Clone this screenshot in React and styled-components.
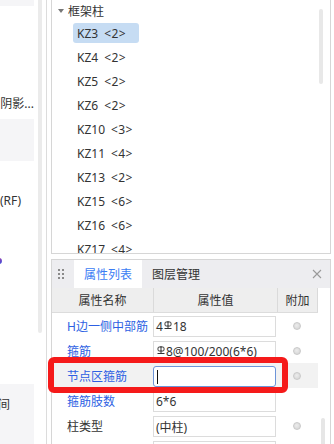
import React from "react";
import styled, { createGlobalStyle } from "styled-components";

const Global = createGlobalStyle`
  html, body { margin: 0; padding: 0; background: #fff; }
  body { font-family: "Noto Sans", "Noto Sans CJK SC", sans-serif; font-size: 12px; color: #333; }
  * { box-sizing: border-box; }
`;

const Page = styled.div`
  position: relative;
  display: flex;
  width: 334px;
  height: 444px;
  overflow: hidden;
  background: #fff;
`;

const Sidebar = styled.div`
  display: flex;
  width: 47px;
  height: 100%;
  border-right: 1px solid #dcdcdc;
  flex-shrink: 0;
`;

const SideContent = styled.div`
  width: 38px;
  display: flex;
  flex-direction: column;
  overflow: hidden;
`;

const SideBlock = styled.div`
  width: 34px;
  height: ${(p) => p.$h}px;
  margin-top: ${(p) => p.$mt || 0}px;
  background: #f5f5f7;
  flex-shrink: 0;
  display: flex;
  flex-direction: column;
`;

const SideText = styled.div`
  width: 34px;
  height: 16px;
  margin-top: ${(p) => p.$mt || 0}px;
  margin-left: ${(p) => p.$ml || 0}px;
  line-height: 16px;
  white-space: nowrap;
  display: flex;
  justify-content: ${(p) => (p.$right ? "flex-end" : "flex-start")};
  color: #333;
  flex-shrink: 0;
`;

const SideDot = styled.div`
  width: 5px;
  height: 6px;
  margin-top: ${(p) => p.$mt}px;
  margin-left: -3px;
  border-radius: 50%;
  background: linear-gradient(135deg, #c2399e, #2c4fe0);
  flex-shrink: 0;
`;

const SideScroll = styled.div`
  width: 4px;
  height: 333px;
  background: #ebebeb;
  border-radius: 0 0 2px 2px;
`;

const Main = styled.div`
  flex: 1;
  display: flex;
  flex-direction: column;
  padding: 0 3px 0 4px;
  gap: 5px;
`;

const TopPanel = styled.div`
  height: 254px;
  border: 1px solid #d6d6d6;
  border-top: none;
  display: flex;
  overflow: hidden;
  flex-shrink: 0;
`;

const Tree = styled.div`
  flex: 1;
  display: flex;
  flex-direction: column;
`;

const TreeHead = styled.div`
  height: 21px;
  display: flex;
  align-items: center;
  padding-left: 6px;
  gap: 4px;
  color: #333;
  flex-shrink: 0;
`;

const Caret = styled.span`
  width: 0;
  height: 0;
  border-left: 3px solid transparent;
  border-right: 3px solid transparent;
  border-top: 4px solid #777;
`;

const TreeRow = styled.div`
  height: 24px;
  display: flex;
  align-items: center;
  padding-left: 21px;
  flex-shrink: 0;
`;

const TreeItem = styled.div`
  height: 20px;
  display: flex;
  align-items: center;
  padding: 0 13px 0 4px;
  border-radius: 3px;
  background: ${(p) => (p.$selected ? "#c6dcf3" : "transparent")};
  color: #333;
  white-space: nowrap;
`;

const Count = styled.span`
  margin-left: 6px;
  letter-spacing: 0.4px;
`;

const TreeScroll = styled.div`
  width: 4px;
  height: 75px;
  margin: 9px 7px 0 0;
  border-radius: 2px;
  background: #e8e8e8;
`;

const BottomPanel = styled.div`
  flex: 1;
  border: 1px solid #d6d6d6;
  border-bottom: none;
  display: flex;
  flex-direction: column;
  overflow: hidden;
`;

const TabBar = styled.div`
  height: 28px;
  background: #ededf0;
  display: flex;
  align-items: stretch;
  flex-shrink: 0;
`;

const Handle = styled.div`
  display: grid;
  grid-template-columns: 2px 2px;
  grid-auto-rows: 2px;
  column-gap: 2px;
  row-gap: 2px;
  align-self: center;
  margin: 0 10px 0 6px;
  span { background: #8a8a8a; }
`;

const Tab = styled.div`
  width: ${(p) => (p.$active ? "68px" : "auto")};
  display: flex;
  align-items: center;
  justify-content: center;
  margin-left: ${(p) => (p.$active ? 0 : 10)}px;
  background: ${(p) => (p.$active ? "#fff" : "transparent")};
  color: ${(p) => (p.$active ? "#3b7cf4" : "#333")};
  white-space: nowrap;
`;

const Close = styled.div`
  margin-left: auto;
  margin-right: 8px;
  align-self: center;
  display: flex;
`;

const TableWrap = styled.div`
  flex: 1;
  display: flex;
`;

const Table = styled.div`
  width: 266px;
  display: flex;
  flex-direction: column;
`;

const HeadRow = styled.div`
  height: 25px;
  display: grid;
  grid-template-columns: 102px 124px 40px;
  background: #eeeeee;
  border-bottom: 1px solid #dcdcdc;
  flex-shrink: 0;
`;

const HeadCell = styled.div`
  display: flex;
  align-items: center;
  justify-content: center;
  border-right: 1px solid #dadada;
  color: #333;
`;

const Row = styled.div`
  height: 25px;
  display: grid;
  grid-template-columns: 101px 124px 41px;
  background: ${(p) => (p.$active ? "#f2f2f2" : "#fff")};
  flex-shrink: 0;
`;

const NameCell = styled.div`
  display: flex;
  align-items: center;
  padding-left: 15px;
  color: ${(p) => (p.$blue ? "#2d5fe3" : "#333")};
  white-space: nowrap;
  overflow: hidden;
`;

const ValueCell = styled.div`
  padding-top: 3px;
`;

const ValueBox = styled.div`
  width: 123px;
  height: 21px;
  border: 1px solid ${(p) => (p.$focus ? "#6d94d8" : "#dcdcdc")};
  border-radius: ${(p) => (p.$focus ? 3 : 0)}px;
  background: #fff;
  display: flex;
  align-items: center;
  padding-left: 2px;
  color: #333;
  white-space: nowrap;
  overflow: hidden;
`;

const TextCaret = styled.span`
  width: 1px;
  height: 14px;
  margin-left: 1px;
  background: #111;
`;

const ExtraCell = styled.div`
  display: flex;
  align-items: center;
  justify-content: center;
  padding-right: 2px;
`;

const Radio = styled.span`
  width: 8px;
  height: 8px;
  border-radius: 50%;
  border: 1px solid #c9c9c9;
  background: radial-gradient(circle at 45% 40%, #ececec, #d2d2d2);
`;

const ScrollCol = styled.div`
  flex: 1;
  padding-left: 3px;
`;

const TableScroll = styled.div`
  width: 4px;
  height: 40px;
  margin-top: 130px;
  border-radius: 2px 2px 0 0;
  background: #e6e6e6;
`;

const Highlight = styled.div`
  position: absolute;
  left: 48px;
  top: 357px;
  width: 240px;
  height: 36px;
  border: 6px solid #f51a1a;
  border-radius: 6px;
  pointer-events: none;
`;

const Sym = () => (
  <svg width="8" height="9" viewBox="0 0 8 9" style={{ margin: "0 1px", marginTop: -3 }}>
    <rect x="1" y="1" width="6" height="4" rx="1.2" fill="none" stroke="#333" strokeWidth="1" />
    <line x1="4" y1="0" x2="4" y2="8" stroke="#333" strokeWidth="1" />
    <line x1="0.5" y1="7.5" x2="7.5" y2="7.5" stroke="#333" strokeWidth="1" />
  </svg>
);

const tree = [
  ["KZ3", "2"],
  ["KZ4", "2"],
  ["KZ5", "2"],
  ["KZ6", "2"],
  ["KZ10", "3"],
  ["KZ11", "4"],
  ["KZ13", "2"],
  ["KZ15", "6"],
  ["KZ16", "6"],
  ["KZ17", "4"],
];

const rows = [
  { name: "H边一侧中部筋", blue: true, value: <>4<Sym />18</>, extra: true },
  { name: "箍筋", blue: true, value: <><Sym />8@100/200(6*6)</>, extra: true },
  { name: "节点区箍筋", blue: true, focus: true, extra: true },
  { name: "箍筋肢数", blue: true, value: "6*6", extra: false },
  { name: "柱类型", blue: false, value: "(中柱)", extra: true },
  { name: "", blue: false, value: "", extra: false },
];

export default function App() {
  return (
    <>
      <Global />
      <Page>
        <Sidebar>
          <SideContent>
            <SideBlock $h={6} />
            <SideText $mt={90} $right>阴影...</SideText>
            <SideBlock $h={42} $mt={7} />
            <SideText $mt={32}>(RF)</SideText>
            <SideDot $mt={49} />
            <SideBlock $h={61} $mt={120}>
              <SideText $mt={13} $ml={-2}>间</SideText>
            </SideBlock>
          </SideContent>
          <SideScroll />
        </Sidebar>
        <Main>
          <TopPanel>
            <Tree>
              <TreeHead>
                <Caret />
                <span>框架柱</span>
              </TreeHead>
              {tree.map(([k, n], i) => (
                <TreeRow key={k}>
                  <TreeItem $selected={i === 0}>
                    <span>{k}</span>
                    <Count>&lt;{n}&gt;</Count>
                  </TreeItem>
                </TreeRow>
              ))}
            </Tree>
            <TreeScroll />
          </TopPanel>
          <BottomPanel>
            <TabBar>
              <Handle>
                {Array.from({ length: 6 }).map((_, i) => (
                  <span key={i} />
                ))}
              </Handle>
              <Tab $active>属性列表</Tab>
              <Tab>图层管理</Tab>
              <Close>
                <svg width="10" height="10" viewBox="0 0 10 10">
                  <path d="M1 1L9 9M9 1L1 9" stroke="#9a9a9a" strokeWidth="1.1" />
                </svg>
              </Close>
            </TabBar>
            <TableWrap>
              <Table>
                <HeadRow>
                  <HeadCell>属性名称</HeadCell>
                  <HeadCell>属性值</HeadCell>
                  <HeadCell>附加</HeadCell>
                </HeadRow>
                {rows.map((r, i) => (
                  <Row key={i} $active={r.focus}>
                    <NameCell $blue={r.blue}>{r.name}</NameCell>
                    <ValueCell>
                      <ValueBox $focus={r.focus}>
                        {r.focus ? <TextCaret /> : r.value}
                      </ValueBox>
                    </ValueCell>
                    <ExtraCell>{r.extra && <Radio />}</ExtraCell>
                  </Row>
                ))}
              </Table>
              <ScrollCol>
                <TableScroll />
              </ScrollCol>
            </TableWrap>
          </BottomPanel>
        </Main>
        <Highlight />
      </Page>
    </>
  );
}
